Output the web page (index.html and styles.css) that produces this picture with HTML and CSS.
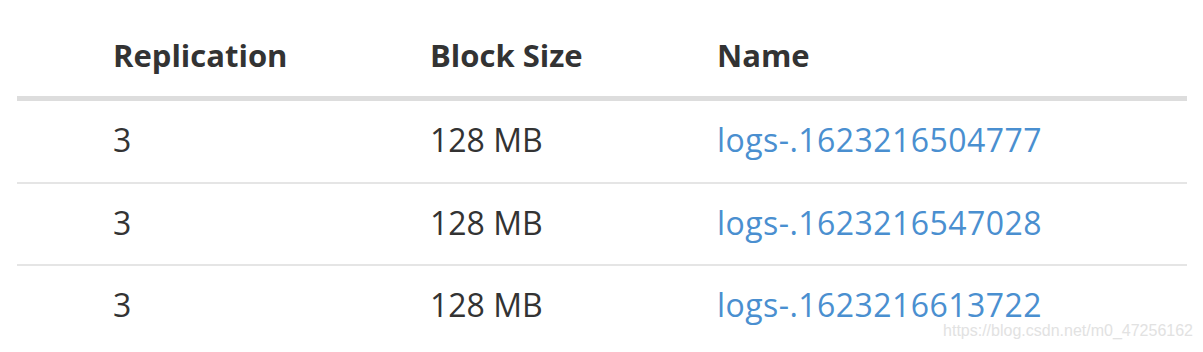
FILE: index.html
```html
<!DOCTYPE html>
<html>
<head>
<meta charset="utf-8">
<link rel="stylesheet" href="styles.css">
</head>
<body>
<div class="page">
  <table class="files">
    <colgroup>
      <col class="c1"><col class="c2"><col class="c3">
    </colgroup>
    <thead>
      <tr><th>Replication</th><th>Block Size</th><th>Name</th></tr>
    </thead>
    <tbody>
      <tr><td>3</td><td>128 MB</td><td><a href="#">logs-.1623216504777</a></td></tr>
      <tr><td>3</td><td>128 MB</td><td><a href="#">logs-.1623216547028</a></td></tr>
      <tr><td>3</td><td>128 MB</td><td><a href="#">logs-.1623216613722</a></td></tr>
    </tbody>
  </table>
  <div class="watermark">https://blog.csdn.net/m0_47256162</div>
</div>
</body>
</html>
```
FILE: styles.css
```css
html, body { margin: 0; padding: 0; background: #fff; }
.page {
  position: relative;
  width: 1203px;
  height: 352px;
  overflow: hidden;
  padding-left: 17px;
  box-sizing: border-box;
}
.files {
  width: 1170px;
  border-collapse: separate;
  border-spacing: 0;
  font-family: "Open Sans", "Noto Sans", sans-serif;
  font-size: 32px;
  line-height: 43px;
  color: #333;
  table-layout: fixed;
}
.c1 { width: 396px; }
.c2 { width: 287px; }
.files th {
  text-align: left;
  font-weight: 700;
  font-size: 31px;
  height: 101px;
  box-sizing: border-box;
  vertical-align: bottom;
  padding: 0 17px 19px 17px;
  border-bottom: 5px solid #dddddd;
}
.files td {
  height: 82px;
  box-sizing: border-box;
  padding: 0 17px 4px 17px;
  vertical-align: middle;
  border-top: 2px solid #e5e5e5;
}
.files tbody tr:first-child td { border-top: 0; height: 81px; }
.files th:first-child, .files td:first-child { padding-left: 96px; }
.files a { color: #4a8fd0; text-decoration: none; letter-spacing: 0.45px; }
.watermark {
  position: absolute;
  right: 10px;
  top: 322px;
  font-family: "Liberation Sans", Arial, sans-serif;
  font-size: 16px;
  color: #e2e2e2;
}
```
